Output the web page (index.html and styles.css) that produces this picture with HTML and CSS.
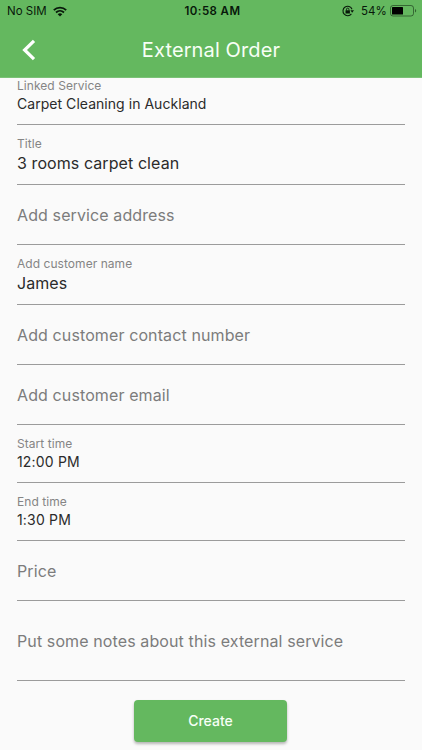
FILE: index.html
```
<!DOCTYPE html>
<html lang="en">
<head>
<meta charset="utf-8">
<title>External Order</title>
<link rel="stylesheet" href="styles.css">
</head>
<body>
<header class="header">
  <div class="status">
    <div class="status-left">
      <span class="carrier">No SIM</span>
      <svg class="wifi" width="14" height="11" viewBox="0 0 14 11" fill="none" stroke="#08180a" stroke-width="1.8">
        <path d="M.8 4.1C4.3.7 9.7.7 13.2 4.1"/>
        <path d="M3 6.5c2.3-2.1 5.700-2.100 8 0"/>
        <path d="M4.700 8.200c1.400-1.200 3.200-1.200 4.600 0L7 10.500z" fill="#08180a" stroke="none"/>
      </svg>
    </div>
    <span class="clock">10:58 AM</span>
    <div class="status-right">
      <svg class="lock" width="12" height="12" viewBox="0 0 12 12" fill="none" stroke="#08180a">
        <path d="M9.400 8.900A4.700 4.700 0 1 1 10 4.200" stroke-width="1.100"/>
        <path d="M8.400 5.200h3.600L10.200 7.700z" fill="#08180a" stroke="none"/>
        <path d="M3.500 5.300h4.400v3.200H3.500z" fill="#08180a" stroke="none"/>
        <path d="M4.500 5.500V4.300a1.200 1.200 0 0 1 2.400 0v1.200" stroke-width=".9"/>
      </svg>
      <span class="percent">54%</span>
      <svg class="battery" width="27" height="12" viewBox="0 0 27 12">
        <rect x=".5" y=".5" width="23" height="10.500" rx="2.500" fill="none" stroke="#08180a" stroke-opacity=".5"/>
        <rect x="2" y="2" width="11" height="7.500" rx=".6" fill="#000"/>
        <path d="M25 4c1.600.5 1.600 3 0 3.500z" fill="#08180a" fill-opacity=".55"/>
      </svg>
    </div>
  </div>
  <div class="bar">
    <svg class="back" width="14" height="22" viewBox="0 0 14 22" fill="none" stroke="#fff" stroke-width="3.200"><path d="M12 1.800 2.600 11 12 20.200"/></svg>
    <h1 class="title">External Order</h1>
  </div>
</header>
<main class="form">
  <div class="field linked"><span class="label">Linked Service</span><span class="value small">Carpet Cleaning in Auckland</span></div>
  <div class="field"><span class="label">Title</span><span class="value">3 rooms carpet clean</span></div>
  <div class="field empty"><span class="hint">Add service address</span></div>
  <div class="field"><span class="label">Add customer name</span><span class="value">James</span></div>
  <div class="field empty"><span class="hint">Add customer contact number</span></div>
  <div class="field empty"><span class="hint">Add customer email</span></div>
  <div class="field time"><span class="label">Start time</span><span class="value small">12:00 PM</span></div>
  <div class="field time"><span class="label">End time</span><span class="value small">1:30 PM</span></div>
  <div class="field empty"><span class="hint">Price</span></div>
  <div class="field empty notes"><span class="hint">Put some notes about this external service</span></div>
  <button class="create">Create</button>
</main>
</body>
</html>
```
FILE: styles.css
```
* { box-sizing: border-box; }
body {
  margin: 0;
  height: 750px;
  overflow: hidden;
  background: #fafafa;
  font-family: Inter, "Liberation Sans", sans-serif;
}
.header {
  height: 78px;
  background: #64b85f;
  border-bottom: 1px solid #7bc277;
}
.status {
  height: 22px;
  display: grid;
  grid-template-columns: 1fr auto 1fr;
  align-items: center;
  padding: 0 5px 0 7px;
  font-size: 11.5px;
  color: #08180a;
}
.status-left, .status-right { display: flex; align-items: center; }
.status-left { gap: 6px; }
.status-right { justify-content: flex-end; }
.clock { font-weight: 600; letter-spacing: .4px; padding-left: 1px; }
.lock { margin-right: 7px; }
.percent { margin-right: 3px; letter-spacing: .1px; }
.bar {
  height: 55px;
  display: grid;
  grid-template-columns: 60px 1fr 60px;
  align-items: center;
}
.back { margin-left: 22px; }
.title {
  margin: 0;
  text-align: center;
  font-size: 20px;
  line-height: 26px;
  font-weight: 400;
  letter-spacing: .12px;
  color: #f7fff6;
}
.form {
  display: flex;
  flex-direction: column;
  padding: 0 17px;
}
.field {
  height: 60px;
  display: flex;
  flex-direction: column;
  padding-top: 11px;
  border-bottom: 1px solid #9b9b9b;
  white-space: nowrap;
}
.linked { height: 47px; padding-top: 0; }
.linked .small { letter-spacing: .04px; }
.time { height: 58px; }
.label {
  font-size: 12px;
  line-height: 16px;
  letter-spacing: .05px;
  color: #858585;
}
.value {
  font-size: 16px;
  line-height: 22px;
  letter-spacing: .08px;
  color: #2b2b2b;
}
.small { font-size: 14px; line-height: 19px; letter-spacing: .18px; }
.empty { padding-top: 18px; }
.hint {
  font-size: 16px;
  line-height: 24px;
  letter-spacing: .11px;
  color: #7c7c7c;
}
.notes { height: 80px; padding-top: 28px; }
.create {
  align-self: center;
  width: 153px;
  height: 42px;
  margin: 19px 1px 0 0;
  padding: 0;
  border: 0;
  border-radius: 4px;
  background: #64b85f;
  box-shadow: 0 2px 3px rgba(0, 0, 0, .28);
  color: #f7fff6;
  font: 500 14px/42px Inter, "Liberation Sans", sans-serif;
}
```
